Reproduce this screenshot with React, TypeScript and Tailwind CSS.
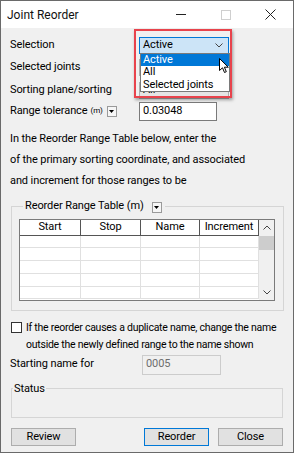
import React from 'react';

const Chevron: React.FC<{ up?: boolean; className?: string }> = ({ up, className }) => (
  <svg width="8" height="5" viewBox="0 0 8 5" className={className}>
    <path d={up ? 'M0.5 4.5L4 1L7.5 4.5' : 'M0.5 0.5L4 4L7.5 0.5'} fill="none" stroke="#444" strokeWidth="1" />
  </svg>
);

const TinyDrop: React.FC = () => (
  <span className="inline-flex items-center justify-center w-[10px] h-[11px] border border-[#9a9a9a] bg-[#f6f6f6]">
    <svg width="5" height="3" viewBox="0 0 5 3">
      <path d="M0 0H5L2.5 3Z" fill="#000" />
    </svg>
  </span>
);

const cols = ['Start', 'Stop', 'Name', 'Increment'];
const widths = ['w-[61px]', 'w-[60px]', 'w-[59px]', 'w-[59px]'];

const App: React.FC = () => {
  return (
    <div className="w-[295px] h-[453px] bg-white">
      <div
        className="relative w-[294px] h-[453px] border border-[#6a6a6a] bg-[#f0f0f0] text-[11px] tracking-[-0.1px] text-black overflow-hidden"
        style={{ fontFamily: 'Roboto, "Liberation Sans", sans-serif' }}
      >
        {/* title bar */}
        <div className="h-[27px] bg-white flex items-center pl-[6px]">
          <span className="text-[12px] tracking-normal text-[#111]">Joint Reorder</span>
          <div className="ml-auto flex items-center h-full">
            <div className="w-[45px] h-full flex items-center justify-center">
              <span className="block w-[10px] h-px bg-[#222]" />
            </div>
            <div className="w-[45px] h-full flex items-center justify-center">
              <span className="block w-[10px] h-[10px] border border-[#cfcfcf]" />
            </div>
            <div className="w-[45px] h-full flex items-center justify-center">
              <svg width="11" height="11" viewBox="0 0 11 11">
                <path d="M0.5 0.5L10.5 10.5M10.5 0.5L0.5 10.5" stroke="#222" strokeWidth="1" />
              </svg>
            </div>
          </div>
        </div>

        {/* form rows */}
        <div className="pl-[9px] pr-[9px] pt-[7px]">
          <div className="flex items-center h-[20px]">
            <span className="w-[129px]">Selection</span>
            <div className="w-[90px] h-[17px] border border-[#0078d7] bg-[#cce4f7] flex items-center px-[3px]">
              <span>Active</span>
              <Chevron className="ml-auto mr-[2px]" />
            </div>
          </div>
          <div className="flex items-center h-[24px]">
            <span className="w-[129px]">Selected joints</span>
            <div className="w-[90px] h-[17px] border border-[#adadad] bg-[#e5e5e5]" />
          </div>
          <div className="flex items-center h-[22px]">
            <span className="w-[129px]">Sorting plane/sorting</span>
            <div className="w-[90px] h-[17px] border border-[#adadad] bg-[#e5e5e5] flex items-center px-[3px]">
              <span>All</span>
            </div>
          </div>
          <div className="flex items-center h-[20px]">
            <span className="w-[129px] flex items-center">
              Range tolerance
              <span className="text-[8px] ml-[3px] mr-[4px]">(m)</span>
              <TinyDrop />
            </span>
            <div className="w-[78px] h-[19px] border border-[#7a7a7a] bg-white flex items-center px-[3px]">
              0.03048
            </div>
          </div>

          <div className="mt-[7px] leading-[21px] whitespace-nowrap">
            <p>In the Reorder Range Table below, enter the</p>
            <p>of the primary sorting coordinate, and associated</p>
            <p>and increment for those ranges to be</p>
          </div>

          {/* group box */}
          <fieldset className="mt-[7px] border border-[#d5d5d5] pl-[7px] pr-[8px] pb-[9px] pt-[4px] mx-[1px]">
            <legend className="flex items-center px-[2px] ml-[4px]">
              Reorder Range Table (m)
              <span className="ml-[8px] mr-[1px]">
                <TinyDrop />
              </span>
            </legend>
            <div className="flex border border-[#7a7a7a] bg-white h-[82px]">
              <div className="flex flex-col">
                <div className="flex h-[16px] border-b border-[#555]">
                  {cols.map((c, i) => (
                    <div key={c} className={`${widths[i]} flex items-center justify-center border-r border-[#555]`}>
                      {c}
                    </div>
                  ))}
                </div>
                {[0, 1, 2, 3, 4].map((r) => (
                  <div key={r} className="flex h-[14.5px] border-b border-[#e0e0e0]">
                    {cols.map((c, i) => (
                      <div key={c} className={`${widths[i]} border-r border-[#e0e0e0]`} />
                    ))}
                  </div>
                ))}
              </div>
              <div className="flex-1 bg-[#f0f0f0] flex flex-col items-center">
                <div className="h-[16px] flex items-center">
                  <Chevron up />
                </div>
                <div className="w-[15px] h-[14px] bg-[#cdcdcd]" />
                <div className="mt-auto h-[14px] flex items-center">
                  <Chevron />
                </div>
              </div>
            </div>
          </fieldset>

          {/* checkbox */}
          <div className="flex mt-[10px] ml-[1px]">
            <span className="w-[11px] h-[11px] border border-[#333] bg-white mt-[1px] shrink-0" />
            <div className="ml-[4px] leading-[17px] -mt-[2px] whitespace-nowrap text-[10.5px] tracking-[-0.25px]">
              <p>If the reorder causes a duplicate name, change the name</p>
              <p>outside the newly defined range to the name shown</p>
            </div>
          </div>

          <div className="flex items-center h-[20px] mt-[2px]">
            <span className="w-[132px]">Starting name for</span>
            <div className="w-[79px] h-[20px] border border-[#cccccc] bg-[#f0f0f0] flex items-center px-[3px] text-[#6d6d6d]">
              0005
            </div>
          </div>

          {/* status */}
          <fieldset className="mt-[6px] border border-[#d5d5d5] h-[37px] mx-[1px]">
            <legend className="px-[1px] ml-[1px]">Status</legend>
          </fieldset>

          <div className="flex mt-[10px] ml-[1px]">
            <button className="w-[65px] h-[18px] border border-[#adadad] bg-[#e1e1e1]">Review</button>
            <button className="ml-auto w-[65px] h-[18px] border border-[#0078d7] bg-[#e1e1e1]">Reorder</button>
            <button className="ml-[9px] mr-[1px] w-[65px] h-[18px] border border-[#adadad] bg-[#e1e1e1]">Close</button>
          </div>
        </div>

        {/* open dropdown overlay */}
        <div className="absolute left-[139px] top-[52px] w-[90px] h-[39px] bg-white border border-[#7a7a7a] flex flex-col">
          <div className="h-[12px] bg-[#0078d7] text-white flex items-center px-[2px]">Active</div>
          <div className="h-[13px] flex items-center px-[2px]">All</div>
          <div className="h-[12px] flex items-center px-[2px]">Selected joints</div>
        </div>
        <svg className="absolute left-[218px] top-[57px]" width="10" height="16" viewBox="0 0 10 16">
          <path d="M0.5 0.5V12.5L3.5 9.8L5.5 14.5L7.3 13.7L5.4 9.2H9.3Z" fill="#fff" stroke="#000" strokeWidth="1" strokeLinejoin="round" />
        </svg>
        <div className="absolute left-[133px] top-[28px] w-[98px] h-[69px] border-[2.5px] border-[#e8434c] shadow-[1px_2px_3px_rgba(0,0,0,0.35)]" />
      </div>
    </div>
  );
};

export default App;
